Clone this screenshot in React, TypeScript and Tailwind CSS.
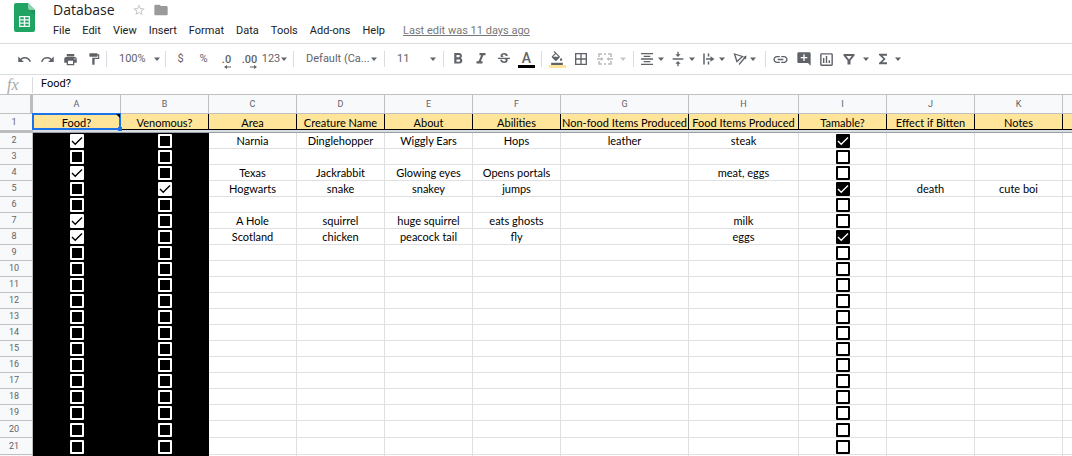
import type { ReactNode } from "react";
import {
  MdAddComment,
  MdBorderAll,
  MdFolder,
  MdFormatAlignCenter,
  MdFormatBold,
  MdFormatColorFill,
  MdFormatItalic,
  MdFormatPaint,
  MdFunctions,
  MdInsertLink,
  MdOutlineInsertChart,
  MdPrint,
  MdRedo,
  MdStarBorder,
  MdStrikethroughS,
  MdUndo,
  MdVerticalAlignCenter,
} from "react-icons/md";

const menus = ["File", "Edit", "View", "Insert", "Format", "Data", "Tools", "Add-ons", "Help"];

const columns = [
  { letter: "A", title: "Food?", width: "w-[88px]" },
  { letter: "B", title: "Venomous?", width: "w-[88px]" },
  { letter: "C", title: "Area", width: "w-[88px]" },
  { letter: "D", title: "Creature Name", width: "w-[88px]" },
  { letter: "E", title: "About", width: "w-[88px]" },
  { letter: "F", title: "Abilities", width: "w-[88px]" },
  { letter: "G", title: "Non-food Items Produced", width: "w-[128px]" },
  { letter: "H", title: "Food Items Produced", width: "w-[110px]" },
  { letter: "I", title: "Tamable?", width: "w-[88px]" },
  { letter: "J", title: "Effect if Bitten", width: "w-[88px]" },
  { letter: "K", title: "Notes", width: "w-[88px]" },
  { letter: "", title: "", width: "w-[88px]" },
];

type Cells = Record<string, string | boolean>;

const data: Record<number, Cells> = {
  2: { A: true, C: "Narnia", D: "Dinglehopper", E: "Wiggly Ears", F: "Hops", G: "leather", H: "steak", I: true },
  4: { A: true, C: "Texas", D: "Jackrabbit", E: "Glowing eyes", F: "Opens portals", H: "meat, eggs" },
  5: { B: true, C: "Hogwarts", D: "snake", E: "snakey", F: "jumps", I: true, J: "death", K: "cute boi" },
  7: { A: true, C: "A Hole", D: "squirrel", E: "huge squirrel", F: "eats ghosts", H: "milk" },
  8: { A: true, C: "Scotland", D: "chicken", E: "peacock tail", F: "fly", H: "eggs", I: true },
};

const rowNumbers = Array.from({ length: 20 }, (_, i) => i + 2);

function Caret({ faded = false }: { faded?: boolean }) {
  return (
    <svg viewBox="0 0 8 8" className={`pointer-events-none size-2 shrink-0 ${faded ? "text-[#c4c6c8]" : "text-[#5f6368]"}`} aria-hidden="true">
      <path d="M1 2.5h6L4 6z" fill="currentColor" />
    </svg>
  );
}

function Separator({ className = "" }: { className?: string }) {
  return <span className={`h-4 w-px shrink-0 bg-[#dadce0] ${className}`} />;
}

function Tool({ label, className = "w-[23px]", children }: { label: string; className?: string; children: ReactNode }) {
  return (
    <button type="button" aria-label={label} className={`flex h-6 shrink-0 items-center justify-center ${className}`}>
      {children}
    </button>
  );
}

function Picker({ label, value, className, caret }: { label: string; value: string; className: string; caret: string }) {
  return (
    <span className={`relative flex h-6 shrink-0 items-center ${className}`}>
      <select aria-label={label} defaultValue={value} className="h-6 w-full appearance-none bg-transparent pl-3 text-[11px] outline-none">
        <option>{value}</option>
      </select>
      <span className={`pointer-events-none absolute ${caret}`}>
        <Caret />
      </span>
    </span>
  );
}

function Decimal({ text, right = false }: { text: string; right?: boolean }) {
  return (
    <span className="flex flex-col items-end pt-1 text-[11px] leading-[11px] font-medium">
      {text}
      <svg viewBox="0 0 7 4" className="h-1 w-[7px]" aria-hidden="true">
        <path d={right ? "M0 1.500h4V0l3 2-3 2V2.500H0z" : "M7 1.500H3V0L0 2l3 2V2.500h4z"} fill="currentColor" />
      </svg>
    </span>
  );
}

function MergeIcon() {
  return (
    <svg viewBox="0 0 16 14" className="h-[14px] w-4 text-[#b9bbbd]" fill="none" stroke="currentColor" strokeWidth="1.5" aria-hidden="true">
      <path d="M5 2H2v3M7 2h2M11 2h3v3M5 12H2V9M7 12h2M11 12h3V9M0 7h5M16 7h-5" />
      <path d="M4 5l2.500 2L4 9zM12 5L9.500 7 12 9z" fill="currentColor" stroke="none" />
    </svg>
  );
}

function WrapIcon() {
  return (
    <svg viewBox="0 0 14 14" className="size-[14px]" fill="none" stroke="currentColor" strokeWidth="1.5" aria-hidden="true">
      <path d="M2 1.500v11M6.500 1.500v3M6.500 9.500v3M4 7h6" />
      <path d="M8.500 4.300l4 2.700-4 2.700z" fill="currentColor" stroke="none" />
    </svg>
  );
}

function RotateIcon() {
  return (
    <svg viewBox="0 0 14 14" className="size-[14px]" fill="none" stroke="currentColor" strokeWidth="1.3" aria-hidden="true">
      <path d="M1.500 2l8 2.500-5.500 5zM1.500 2l2.500 8M6 12.500l6-7" />
      <path d="M13.500 3.500l-.5 4-3-2.500z" fill="currentColor" stroke="none" />
    </svg>
  );
}

function FilterIcon() {
  return (
    <svg viewBox="0 0 14 14" className="size-[14px]" aria-hidden="true">
      <path d="M1.500 2h11v1.500L8.500 8.500v4h-3v-4l-4-5zM4.300 4l2.700 3.400L9.700 4z" fill="currentColor" fillRule="evenodd" />
    </svg>
  );
}

function SheetsLogo() {
  return (
    <svg viewBox="0 0 21 29" className="mt-[3px] h-[29px] w-[21px] shrink-0" role="img" aria-label="Sheets home">
      <path d="M2 0h12l7 7v20a2 2 0 0 1-2 2H2a2 2 0 0 1-2-2V2a2 2 0 0 1 2-2z" fill="#20a464" />
      <path d="M14 0l7 7h-5a2 2 0 0 1-2-2z" fill="#8ed1b1" />
      <path d="M15 7h6v6z" fill="#168a50" opacity=".5" />
      <path d="M5 13h11v11H5zM6.300 14.300v2h3.500v-2zM11.200 14.300v2h3.500v-2zM6.300 17.500v2h3.500v-2zM11.200 17.500v2h3.500v-2zM6.300 20.700v2h3.500v-2zM11.200 20.700v2h3.500v-2z" fill="#f4fbf7" fillRule="evenodd" />
    </svg>
  );
}

function CellCheckbox({ label, checked, dark }: { label: string; checked: boolean; dark: boolean }) {
  return (
    <label className="grid h-[15px] place-items-center pt-px">
      <input
        type="checkbox"
        aria-label={label}
        defaultChecked={checked}
        className={`peer col-start-1 row-start-1 size-[14px] appearance-none rounded-[1px] border-2 ${
          dark ? "border-white bg-black checked:bg-white" : "border-black bg-white checked:bg-black"
        }`}
      />
      <svg
        viewBox="0 0 14 14"
        className={`pointer-events-none invisible col-start-1 row-start-1 size-[14px] peer-checked:visible ${dark ? "text-black" : "text-white"}`}
        fill="none"
        stroke="currentColor"
        strokeWidth="1.4"
        aria-hidden="true"
      >
        <path d="M2 7l3.200 3.200L12 3.500" />
      </svg>
    </label>
  );
}

function Cell({ row, letter, height }: { row: number; letter: string; height: string }) {
  const value = data[row]?.[letter];
  const dark = letter === "A" || letter === "B";
  const isBox = dark || letter === "I";
  return (
    <td
      className={`overflow-hidden border-r border-b p-0 text-center text-[11px] leading-[15px] whitespace-nowrap text-black ${height} ${
        dark ? "border-black bg-black" : "border-[#e0e0e0] bg-white"
      }`}
    >
      {isBox ? <CellCheckbox label={`${letter}${row}`} checked={value === true} dark={dark} /> : value}
    </td>
  );
}

export default function App() {
  return (
    <div className="flex h-screen flex-col overflow-hidden bg-white font-['Roboto',sans-serif] text-[#3c4043]">
      <header className="flex h-[43px] shrink-0 pl-[14px]">
        <SheetsLogo />
        <div className="flex flex-col pl-[18px]">
          <div className="flex h-5 items-center">
            <h1 className="font-['Open_Sans',sans-serif] text-[14px] leading-5 text-[#202124]">Database</h1>
            <button type="button" aria-label="Star" className="ml-[17px] text-[#c8c8c8]">
              <MdStarBorder className="size-[14px]" />
            </button>
            <button type="button" aria-label="Move to folder" className="ml-[7px] text-[#9a9a9a]">
              <MdFolder className="size-4" />
            </button>
          </div>
          <div className="flex h-[23px] items-center">
            <nav aria-label="Menu" className="flex gap-3 text-[11px] text-[#202124]">
              {menus.map((m) => (
                <button key={m} type="button">
                  {m}
                </button>
              ))}
            </nav>
            <a href="#history" className="ml-[18px] text-[11px] text-[#777777] underline">
              Last edit was 11 days ago
            </a>
          </div>
        </div>
      </header>

      <div role="toolbar" aria-label="Formatting" className="flex h-8 shrink-0 items-center border-y border-[#dadce0] pl-[13px] text-[11px] text-[#5f6368]">
        <Tool label="Undo"><MdUndo className="size-[15px]" /></Tool>
        <Tool label="Redo"><MdRedo className="size-[15px]" /></Tool>
        <Tool label="Print"><MdPrint className="size-[15px]" /></Tool>
        <Tool label="Paint format"><MdFormatPaint className="size-[14px]" /></Tool>
        <Separator className="ml-px" />
        <Picker label="Zoom" value="100%" className="w-[58px]" caret="right-1" />
        <Separator className="mr-[3px]" />
        <Tool label="Format as currency">$</Tool>
        <Tool label="Format as percent">%</Tool>
        <Tool label="Decrease decimal places"><Decimal text=".0" /></Tool>
        <Tool label="Increase decimal places"><Decimal text=".00" right /></Tool>
        <Tool label="More formats" className="w-7">123<Caret /></Tool>
        <Separator className="ml-1" />
        <Picker label="Font" value="Default (Ca..." className="w-[90px]" caret="right-[6px]" />
        <Separator />
        <Picker label="Font size" value="11" className="w-[58px]" caret="right-[6px]" />
        <Separator className="mr-[2px]" />
        <Tool label="Bold"><MdFormatBold className="size-[18px]" /></Tool>
        <Tool label="Italic"><MdFormatItalic className="size-[18px]" /></Tool>
        <Tool label="Strikethrough"><MdStrikethroughS className="size-4" /></Tool>
        <Tool label="Text colour">
          <span className="flex flex-col items-center text-[14px] leading-[14px] font-medium">
            A
            <span className="h-[3px] w-[17px] bg-black" />
          </span>
        </Tool>
        <Separator className="mx-[3px]" />
        <Tool label="Fill colour" className="w-6">
          <span className="flex flex-col items-center">
            <MdFormatColorFill className="size-[14px]" />
            <span className="h-[3px] w-[17px] bg-[#ffe599]" />
          </span>
        </Tool>
        <Tool label="Borders" className="w-6"><MdBorderAll className="size-4" /></Tool>
        <Tool label="Merge cells" className="w-6"><MergeIcon /></Tool>
        <Tool label="Merge options" className="w-3"><Caret faded /></Tool>
        <Separator className="mr-[5px] ml-1" />
        <div className="flex gap-[5px]">
          <Tool label="Horizontal align" className="w-[26px]"><MdFormatAlignCenter className="mr-[2px] size-4" /><Caret /></Tool>
          <Tool label="Vertical align" className="w-[26px]"><MdVerticalAlignCenter className="mr-[2px] size-4" /><Caret /></Tool>
          <Tool label="Text wrapping" className="w-[26px]"><span className="mr-[2px]"><WrapIcon /></span><Caret /></Tool>
          <Tool label="Text rotation" className="w-[26px]"><span className="mr-[2px]"><RotateIcon /></span><Caret /></Tool>
        </div>
        <Separator className="mr-[3px] ml-[7px]" />
        <Tool label="Insert link"><MdInsertLink className="size-[17px]" /></Tool>
        <Tool label="Insert comment"><MdAddComment className="size-4" /></Tool>
        <Tool label="Insert chart" className="w-[22px]"><MdOutlineInsertChart className="size-[17px]" /></Tool>
        <Tool label="Create a filter"><FilterIcon /></Tool>
        <Tool label="Filter views" className="w-3"><Caret /></Tool>
        <Tool label="Functions" className="w-[22px]"><MdFunctions className="size-4" /></Tool>
        <Tool label="More functions" className="w-2"><Caret /></Tool>
      </div>

      <div className="flex h-5 shrink-0 items-center border-b border-[#c0c0c0]">
        <label htmlFor="formula" className="w-8 pl-[7px] font-['Liberation_Serif',serif] text-[16px] leading-4 text-[#a8a8a8] italic">
          fx
        </label>
        <Separator className="h-3" />
        <input id="formula" defaultValue="Food?" className="h-4 min-w-0 flex-1 bg-transparent pl-2 text-[11px] text-black outline-none" />
      </div>

      <div className="min-h-0 flex-1 overflow-hidden">
        <table className="w-[1151px] table-fixed border-separate border-spacing-0 font-['Lato',sans-serif]">
          <colgroup>
            <col className="w-[33px]" />
            {columns.map((c) => (
              <col key={c.letter} className={c.width} />
            ))}
          </colgroup>
          <thead>
            <tr>
              <td className="h-[19px] border-r-3 border-b border-r-[#bdbdbd] border-b-[#c0c0c0] bg-[#f8f9fa] p-0" />
              {columns.map((c) => (
                <th key={c.letter} scope="col" className="h-[19px] border-r border-b border-[#c0c0c0] bg-[#f8f9fa] p-0 font-['Roboto',sans-serif] text-[9px] leading-[18px] font-normal text-[#5f6368]">
                  {c.letter}
                </th>
              ))}
            </tr>
            <tr>
              <th scope="row" className="h-4 border-r border-[#c0c0c0] bg-[#f8f9fa] p-0 pr-1 font-['Roboto',sans-serif] text-[9px] leading-[15px] font-normal text-[#5f6368]">1</th>
              {columns.map((c) => (
                <th key={c.letter} className="relative h-4 border-r border-b border-black bg-[#ffe599] p-0 text-[11px] leading-[13px] font-normal whitespace-nowrap text-black">
                  <span className="flex justify-center pt-0.5">{c.title}</span>
                  {c.letter === "A" && (
                    <>
                      <svg viewBox="0 0 4 4" className="absolute top-0 right-0 z-10 size-1" aria-hidden="true">
                        <path d="M0 0h4v4z" fill="#000" />
                      </svg>
                      <span className="absolute -inset-px border-2 border-[#1a73e8]" />
                      <span className="absolute -right-0.5 -bottom-0.5 z-10 size-1 bg-[#1a73e8]" />
                    </>
                  )}
                </th>
              ))}
            </tr>
            <tr aria-hidden="true">
              <td className="h-[3px] bg-[#bdbdbd] p-0" />
              <td colSpan={columns.length} className="h-[3px] border-b border-[#9aa0a6] bg-[#d9dce3] p-0" />
            </tr>
          </thead>
          <tbody>
            {rowNumbers.map((row) => {
              const height = row >= 20 ? "h-[17px]" : "h-4";
              return (
                <tr key={row}>
                  <th scope="row" className={`border-r border-b border-[#c0c0c0] bg-[#f8f9fa] p-0 pr-1 font-['Roboto',sans-serif] text-[9px] leading-[15px] font-normal text-[#5f6368] ${height}`}>
                    {row}
                  </th>
                  {columns.map((c) => (
                    <Cell key={c.letter} row={row} letter={c.letter} height={height} />
                  ))}
                </tr>
              );
            })}
            <tr aria-hidden="true">
              <td className="h-4 border-r border-[#c0c0c0] bg-[#f8f9fa] p-0" />
              <td colSpan={2} className="h-4 bg-black p-0" />
              {columns.slice(2).map((c) => (
                <td key={c.letter} className="h-4 border-r border-[#e0e0e0] p-0" />
              ))}
            </tr>
          </tbody>
        </table>
      </div>
    </div>
  );
}
